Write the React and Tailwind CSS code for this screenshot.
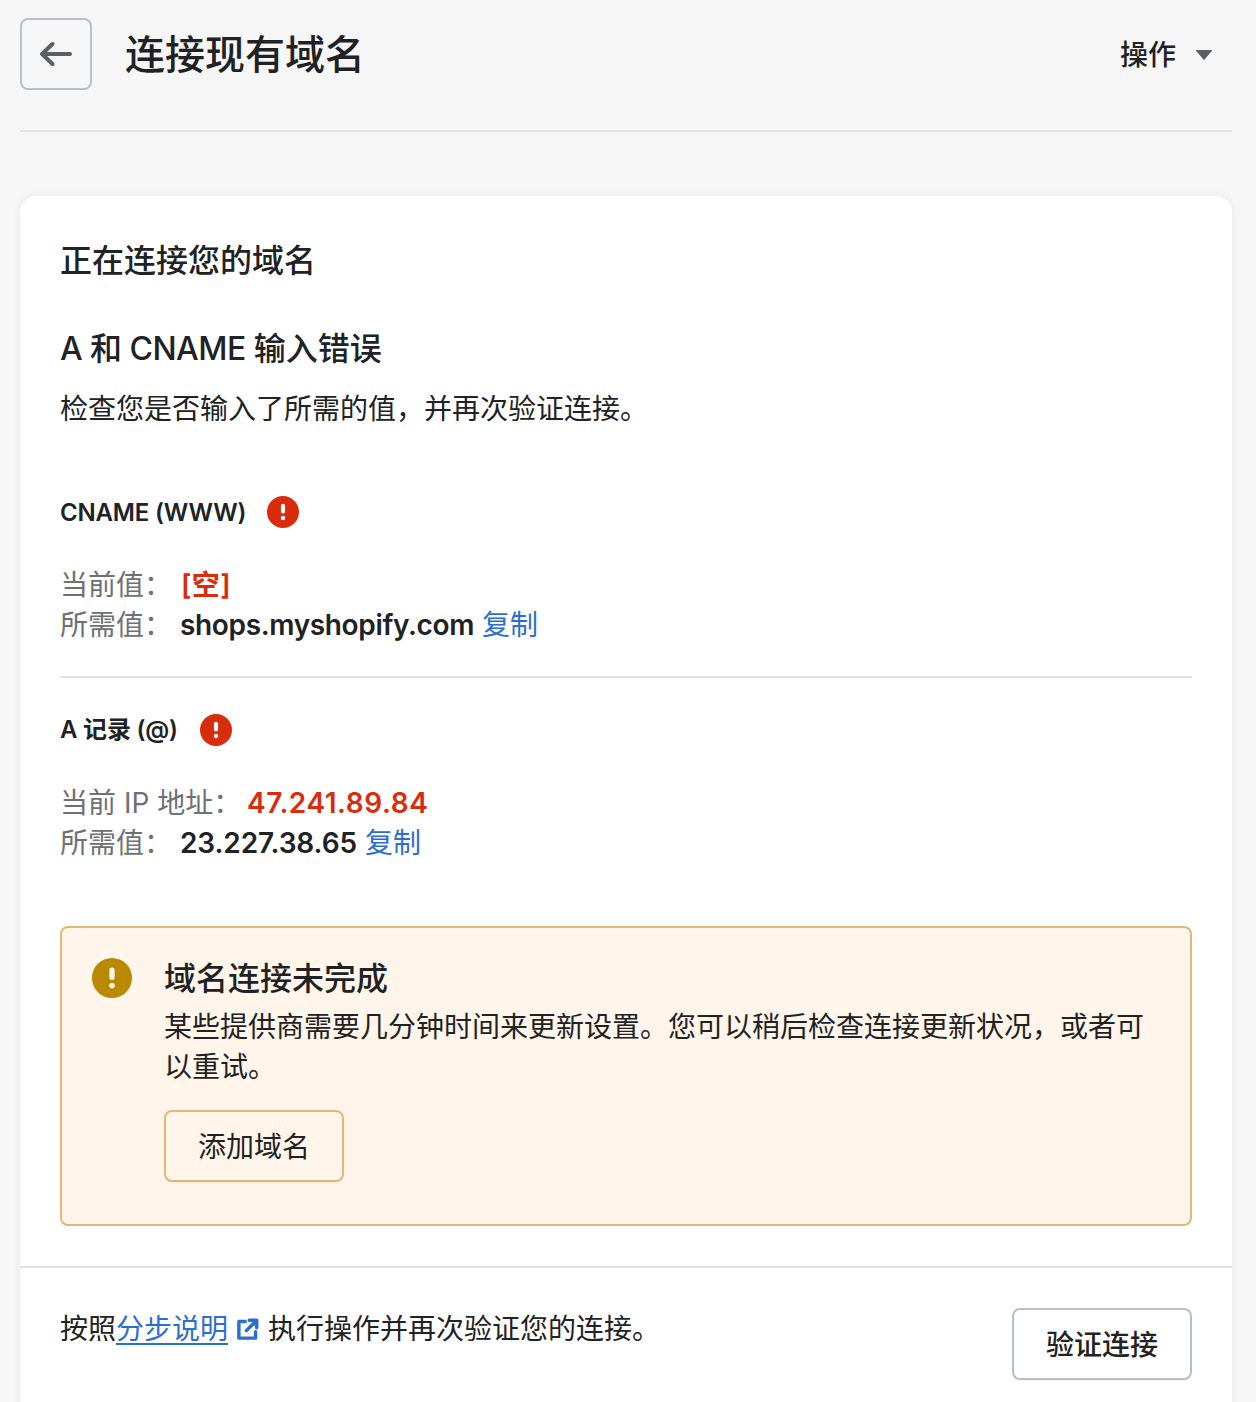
const FONT = 'font-["Inter","Noto_Sans_CJK_SC",sans-serif]'

function AlertIcon({ className }) {
  return (
    <svg viewBox="0 0 20 20" className={className} fill="currentColor">
      <path fillRule="evenodd" d="M10 0a10 10 0 1 0 0 20 10 10 0 0 0 0-20zM8.7 6.1a1.3 1.3 0 0 1 2.6 0v3.6a1.3 1.3 0 0 1-2.6 0V6.1zM10 12.4a1.4 1.4 0 1 0 0 2.8 1.4 1.4 0 0 0 0-2.8z" />
    </svg>
  )
}

function ValueRow({ label, children, labelWidth = 'w-[120px]' }) {
  return (
    <div className="flex h-10 items-center whitespace-nowrap text-[28px] leading-10">
      <span className={`${labelWidth} text-[#6d7175]`}>{label}</span>
      {children}
    </div>
  )
}

function CopyLink() {
  return <span className="ml-2 text-[#2c6ecb]">复制</span>
}

export default function App() {
  return (
    <div className={`${FONT} h-[1402px] overflow-hidden bg-[#f6f6f7] pl-5 pr-6 text-[#202223]`}>
      <header className="flex h-[132px] items-start border-b-2 border-[#e1e3e5] pt-[18px]">
        <button className="flex h-[72px] w-[72px] items-center justify-center rounded-lg border-2 border-[#babfc3]">
          <svg viewBox="0 0 36 36" className="h-9 w-9 text-[#5c5f62]" fill="none" stroke="currentColor" strokeWidth="4" strokeLinecap="round" strokeLinejoin="round">
            <path d="M32 18H4M14.5 8 4 18l10.5 10" />
          </svg>
        </button>
        <h1 className="ml-[33px] flex h-[72px] items-center pt-0.5 text-[40px] font-medium">连接现有域名</h1>
        <div className="ml-auto mr-5 flex h-[72px] items-center pt-0.5 text-[28px] font-medium">
          操作
          <svg viewBox="0 0 16 10" className="ml-5 h-[10px] w-4 text-[#5c5f62]" fill="currentColor">
            <path d="M0.4 0h15.2a.4.4 0 0 1 .3.7L8.6 9.6a.8.8 0 0 1-1.2 0L.1.7A.4.4 0 0 1 .4 0z" />
          </svg>
        </div>
      </header>

      <main className="mt-16 rounded-t-2xl bg-white shadow-[0_0_10px_rgba(23,24,24,0.06)]">
        <div className="px-10 pb-10 pt-[41px]">
          <h2 className="text-[32px] font-medium leading-12">正在连接您的域名</h2>
          <h3 className="mt-10 text-[32px] font-medium leading-12">
            <span className="tracking-[-0.55px]">A 和 CNAME </span>输入错误
          </h3>
          <p className="mt-4 text-[28px] leading-10">检查您是否输入了所需的值，并再次验证连接。</p>

          <div className="mt-[67px] flex h-8 items-center gap-[21px] pt-0.5 text-2xl font-semibold leading-8">
            <span className="tracking-[-0.2px]">CNAME (WWW)</span>
            <AlertIcon className="-mt-0.5 h-8 w-8 text-[#d82c0d]" />
          </div>
          <div className="mt-[37px]">
            <ValueRow label="当前值：">
              <span className="ml-px font-semibold tracking-[0.4px] text-[#d82c0d]">[空]</span>
            </ValueRow>
            <ValueRow label="所需值：">
              <span className="font-semibold tracking-[-0.35px]">shops.myshopify.com</span>
              <CopyLink />
            </ValueRow>
          </div>

          <div className="mt-[31px] h-0.5 bg-[#e1e3e5]" />

          <div className="mt-9 flex h-8 items-center gap-[22px] text-2xl font-semibold leading-8">
            <span className="tracking-[-0.2px]">A 记录 (@)</span>
            <AlertIcon className="h-8 w-8 text-[#d82c0d]" />
          </div>
          <div className="mt-[37px]">
            <ValueRow label="当前 IP 地址：" labelWidth="w-[187px]">
              <span className="font-semibold tracking-[0.55px] text-[#d82c0d]">47.241.89.84</span>
            </ValueRow>
            <ValueRow label="所需值：">
              <span className="font-semibold tracking-[-0.1px]">23.227.38.65</span>
              <CopyLink />
            </ValueRow>
          </div>

          <section className="mt-[63px] flex h-[300px] rounded-lg border-2 border-[#e1b878] bg-[#fff5ea] px-[30px] pt-[30px]">
            <AlertIcon className="h-10 w-10 shrink-0 text-[#b98900]" />
            <div className="ml-8">
              <h4 className="mt-px text-[32px] font-medium leading-10">域名连接未完成</h4>
              <p className="mt-2 text-[28px] leading-10">某些提供商需要几分钟时间来更新设置。您可以稍后检查连接更新状况，或者可以重试。</p>
              <button className="mt-[23px] h-[72px] w-[180px] rounded-lg border-2 border-[#e1b878] bg-[#fff5ea] pt-0.5 text-[28px] shadow-[0_1px_0_rgba(0,0,0,0.05)]">添加域名</button>
            </div>
          </section>
        </div>

        <footer className="flex h-[160px] items-start justify-between border-t-2 border-[#e1e3e5] px-10 pt-10">
          <p className="flex h-10 items-center whitespace-nowrap pt-0.5 text-[28px] leading-10">
            按照
            <span className="text-[#2c6ecb] underline underline-offset-4">分步说明</span>
            <svg viewBox="0 0 20 20" className="ml-2 mr-[9px] h-[23px] w-[23px] text-[#2c6ecb]" fill="none" stroke="currentColor" strokeWidth="3" strokeLinecap="round" strokeLinejoin="round">
              <path d="M8 3H2.5v14.5H17V12M11.5 2H18v6.5M18 2 9 11" />
            </svg>
            执行操作并再次验证您的连接。
          </p>
          <button className="h-[72px] w-[180px] rounded-lg border-2 border-[#babfc3] bg-white pt-0.5 text-[28px] font-medium shadow-[0_1px_0_rgba(0,0,0,0.05)]">验证连接</button>
        </footer>
      </main>
    </div>
  )
}
